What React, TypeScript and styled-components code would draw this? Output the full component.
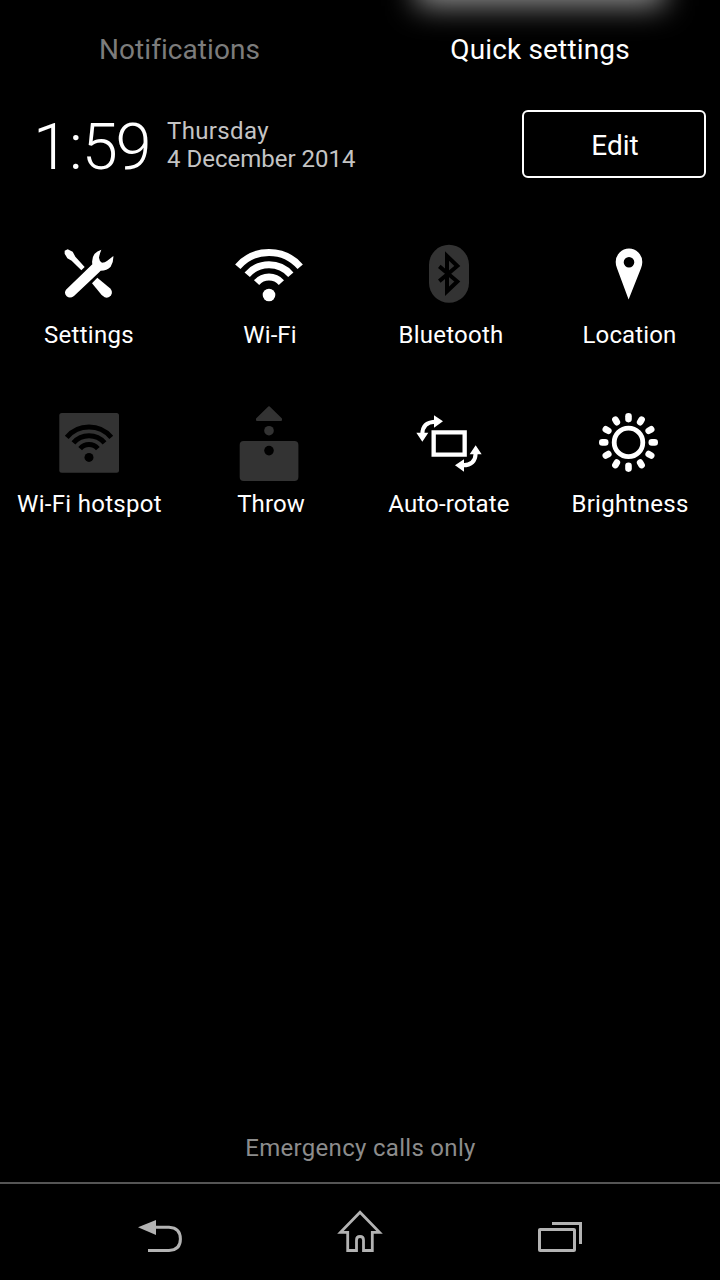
import React from "react";
import styled, { createGlobalStyle } from "styled-components";

const GlobalStyle = createGlobalStyle`
  * { box-sizing: border-box; }
  body { margin: 0; background: #000; }
`;

const Screen = styled.main`
  display: flex;
  flex-direction: column;
  width: 720px;
  height: 1280px;
  overflow: hidden;
  background: #000;
  color: #fff;
  font-family: Roboto, "Liberation Sans", sans-serif;
`;

const Tabs = styled.nav`
  position: relative;
  display: grid;
  grid-template-columns: 1fr 1fr;
  height: 98px;
  overflow: hidden;
`;

const Glow = styled.div`
  position: absolute;
  top: -60px;
  left: 416px;
  width: 248px;
  height: 66px;
  background: #909090;
  filter: blur(15px);
`;

const Tab = styled.button<{ $active?: boolean }>`
  position: relative;
  display: flex;
  justify-content: center;
  border: 0;
  padding: ${(p) => (p.$active ? "33px 0 0" : "33px 1px 0 0")};
  background: none;
  color: ${(p) => (p.$active ? "#fff" : "#7c7c7c")};
  font: 400 28px/33px Roboto, sans-serif;
  letter-spacing: ${(p) => (p.$active ? 0.15 : 0.05)}px;
`;

const Header = styled.header`
  display: flex;
  align-items: flex-start;
  height: 134px;
  padding: 12px 14px 0 33px;
`;

const Clock = styled.time`
  width: 134px;
  font-size: 65px;
  line-height: 74px;
  font-weight: 300;
  white-space: nowrap;
`;

const Minutes = styled.span`
  margin-left: -1px;
  letter-spacing: -2.3px;
`;

const DateText = styled.div`
  flex: 1;
  padding-top: 7px;
  color: #c4c4c4;
  font-size: 24px;
  line-height: 28px;
`;

const DateLine = styled.div<{ $spacing?: number }>`
  letter-spacing: ${(p) => p.$spacing ?? 0}px;
`;

const EditButton = styled.button`
  width: 184px;
  height: 68px;
  border: 2px solid #fff;
  border-radius: 6px;
  padding: 3px 0 0 2px;
  background: none;
  color: #fff;
  font: 400 28px/33px Roboto, sans-serif;
`;

const Grid = styled.section`
  display: grid;
  grid-template-columns: repeat(4, 180px);
  grid-auto-rows: 169px;
`;

const Tile = styled.div`
  display: flex;
  flex-direction: column;
  align-items: center;
`;

const TileIcon = styled.svg`
  display: block;
  width: 120px;
  height: 88px;
`;

const Label = styled.span<{ $shift: number; $spacing: number }>`
  font-size: 24px;
  line-height: 30px;
  white-space: nowrap;
  letter-spacing: ${(p) => p.$spacing}px;
  transform: translateX(${(p) => p.$shift}px);
`;

const Carrier = styled.footer`
  margin-top: auto;
  height: 50px;
  padding-left: 1px;
  color: #8c8c8c;
  font-size: 24px;
  line-height: 32px;
  letter-spacing: 0.3px;
  text-align: center;
`;

const NavBar = styled.nav`
  display: grid;
  grid-template-columns: repeat(3, 200px);
  justify-content: center;
  justify-items: center;
  height: 98px;
  border-top: 2px solid #555;
`;

const NavIcon = styled.svg`
  display: block;
  width: 60px;
  height: 60px;
  margin-top: 16px;
  color: #b3b3b3;
`;

const DIM = "#333";

const WifiWaves = ({ color }: { color: string }) => (
  <>
    <g fill="none" stroke={color} strokeWidth="7">
      <path d="M-31.2-28.2A41 41 0 0 1 31.2-28.2" />
      <path d="M-21.8-20.3A28.9 28.9 0 0 1 21.8-20.3" />
      <path d="M-12.4-12.4A16.6 16.6 0 0 1 12.4-12.4" />
    </g>
    <circle r="6.3" fill={color} />
  </>
);

const SettingsIcon = () => (
  <g transform="translate(0 3) scale(.33333)" fill="#fff">
    <path d="M104 47L113 43L128 50L136 65L164 96L154 106L125 77L112 70L104 56Z" />
    <path d="M202 128L240 160Q250 170 243 181Q236 191 224 187L215 180L186 145Z" />
    <path d="M214 44Q209 56 207 68Q208 79 216 83Q225 83 232 77L250 63Q251 82 242 95Q231 107 212 107L206 113L132 183Q120 192 110 184Q101 175 108 164L187 88Q184 69 194 56Q201 48 214 44Z" />
  </g>
);

const WifiIcon = () => (
  <g transform="translate(59 63)">
    <WifiWaves color="#fff" />
  </g>
);

const BluetoothIcon = () => (
  <g transform="translate(0 3)">
    <rect x="39" y="9.8" width="40" height="58" rx="20" fill={DIM} />
    <path d="M49.3 31.4L67.3 46.5L57 56.3V21L67.3 31L49.3 46.1" fill="none" stroke="#000" strokeWidth="4" strokeMiterlimit="8" />
  </g>
);

const LocationIcon = () => (
  <path fill="#fff" fillRule="evenodd" d="M59 16.6A13.3 13.3 0 0 1 72.3 29.9Q72.3 33 71 36.2L58.6 67.5L47 36.2Q45.7 33 45.7 29.9A13.3 13.3 0 0 1 59 16.6ZM59 24.9A5.3 5.3 0 1 0 59 35.5A5.3 5.3 0 1 0 59 24.9Z" />
);

const HotspotIcon = () => (
  <>
    <rect x="29.3" y="12" width="59.7" height="59.7" rx="2.5" fill={DIM} />
    <g transform="translate(59 56.4) scale(.714)">
      <WifiWaves color="#000" />
    </g>
  </>
);

const ThrowIcon = () => (
  <g transform="translate(0 -1)" fill={DIM}>
    <path d="M59 7.3L71 19V20H47V19Z" stroke={DIM} strokeWidth="2" strokeLinejoin="round" />
    <circle cx="59" cy="30.7" r="4.8" />
    <rect x="29.7" y="41" width="58.7" height="40" rx="4" />
    <circle cx="59" cy="50.6" r="4.8" fill="#000" />
  </g>
);

const RotateIcon = () => (
  <g transform="translate(-10 -1) scale(.33333)" fill="#fff">
    <path d="M161 97H254V164H161Z" fill="none" stroke="#fff" strokeWidth="13" />
    <path d="M127 101Q128 67 164 65M287 160Q286 195 249 196" fill="none" stroke="#fff" strokeWidth="12" />
    <path d="M162 46L189 64L162 83ZM109 98H145L127 125ZM287 136L305 163H269ZM225 196L252 178V215Z" />
  </g>
);

const BrightnessIcon = () => (
  <g transform="translate(58.5 41.4)" fill="none" stroke="#fff">
    <circle r="14.3" strokeWidth="4.8" />
    {Array.from({ length: 12 }, (_, i) => (
      <path key={i} d="M0-23.3V-26.2" strokeWidth="6.6" strokeLinecap="round" transform={`rotate(${i * 30})`} />
    ))}
  </g>
);

const tiles = [
  { label: "Settings", Icon: SettingsIcon, shift: -1, spacing: 0.3 },
  { label: "Wi-Fi", Icon: WifiIcon, shift: 0, spacing: 0.1 },
  { label: "Bluetooth", Icon: BluetoothIcon, shift: 1, spacing: 0.25 },
  { label: "Location", Icon: LocationIcon, shift: -0.5, spacing: 0.15 },
  { label: "Wi-Fi hotspot", Icon: HotspotIcon, shift: -0.5, spacing: 0.3 },
  { label: "Throw", Icon: ThrowIcon, shift: 1, spacing: 0.1 },
  { label: "Auto-rotate", Icon: RotateIcon, shift: -1, spacing: 0.15 },
  { label: "Brightness", Icon: BrightnessIcon, shift: 0, spacing: 0.3 },
];

export default function App() {
  return (
    <Screen>
      <GlobalStyle />
      <Tabs>
        <Glow />
        <Tab>Notifications</Tab>
        <Tab $active>Quick settings</Tab>
      </Tabs>
      <Header>
        <Clock>1:<Minutes>59</Minutes></Clock>
        <DateText>
          <DateLine $spacing={0.35}>Thursday</DateLine>
          <DateLine>4 December 2014</DateLine>
        </DateText>
        <EditButton>Edit</EditButton>
      </Header>
      <Grid>
        {tiles.map(({ label, Icon, shift, spacing }) => (
          <Tile key={label}>
            <TileIcon viewBox="0 0 120 88">
              <Icon />
            </TileIcon>
            <Label $shift={shift} $spacing={spacing}>{label}</Label>
          </Tile>
        ))}
      </Grid>
      <Carrier>Emergency calls only</Carrier>
      <NavBar>
        <NavIcon viewBox="130 1200 60 60">
          <path d="M138 1227.3L156 1220V1235Z" fill="currentColor" />
          <path d="M155 1227.3H169Q180.4 1228 180.4 1239T169 1250.4H148" fill="none" stroke="currentColor" strokeWidth="3" />
        </NavIcon>
        <NavIcon viewBox="330 1200 60 60">
          <path d="M360 1212.2L379.5 1232.4H372.3V1250.5H363.5V1240.2Q363.5 1236.5 360 1236.5T356.5 1240.2V1250.5H347.7V1232.4H340.5Z" fill="none" stroke="currentColor" strokeWidth="2.8" />
        </NavIcon>
        <NavIcon viewBox="530 1200 60 60">
          <g fill="none" stroke="currentColor" strokeWidth="3">
            <rect x="539.5" y="1229.5" width="35" height="21" rx=".6" />
            <path d="M552 1223.5H580.5V1244" />
          </g>
        </NavIcon>
      </NavBar>
    </Screen>
  );
}
